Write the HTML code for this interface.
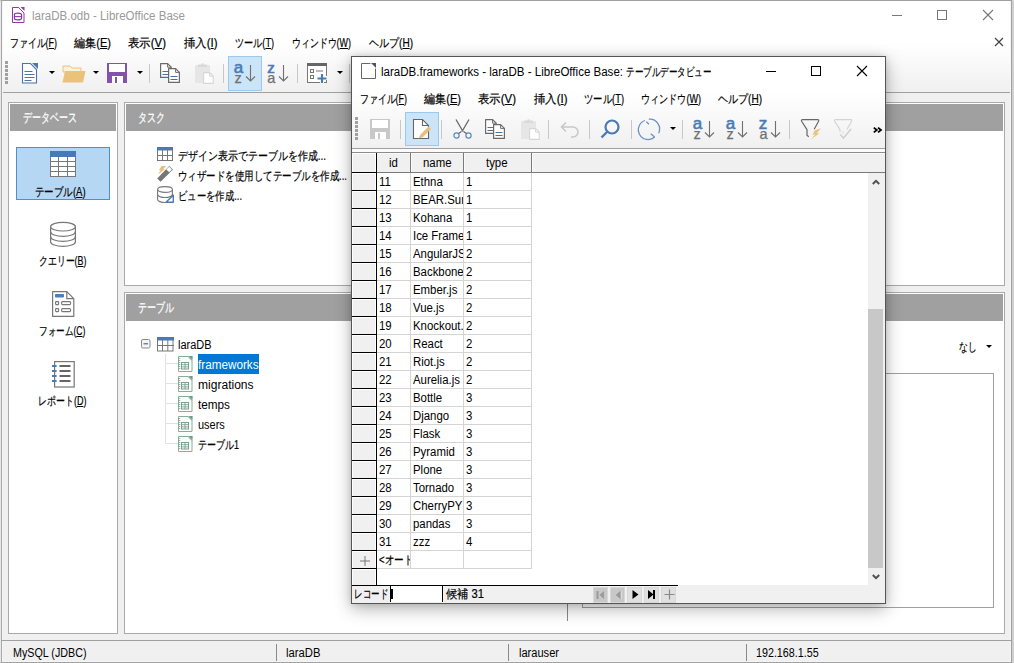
<!DOCTYPE html>
<html><head><meta charset="utf-8">
<style>
*{box-sizing:border-box;margin:0;padding:0}
html,body{width:1014px;height:663px;overflow:hidden}
body{position:relative;background:#d0d0d0;font-family:"Liberation Sans",sans-serif;font-size:12px;color:#000}
.a{position:absolute}
svg{position:absolute;overflow:visible}
.t{position:absolute;white-space:nowrap;line-height:14px;transform-origin:0 50%}
u{text-decoration:underline;text-underline-offset:1px}
.panel{position:absolute;background:#fff;border:1px solid #a9a9a9}
.ph{position:absolute;left:1px;top:1px;right:1px;height:27px;background:#a0a0a0;color:#fff}
.vs{position:absolute;width:1px;background:#c8c8c8}
.dd{position:absolute;width:0;height:0;border-left:3px solid transparent;border-right:3px solid transparent;border-top:3px solid #000}
.hl{position:absolute;background:#cce4f7;border:1px solid #99c9ef}
</style></head><body>
<div id="main" class="a" style="left:0;top:0;width:1012px;height:663px;background:#f0f0f0;border:1px solid #a0a0a0;border-left-color:#e8e8e8">
  <div class="a" style="left:0;top:0;width:1010px;height:91px;background:linear-gradient(#fff 0,#fff 42px,#f0f0f0 91px)"></div>
  <div class="a" style="left:0;top:91px;width:1010px;height:1px;background:#a0a0a0"></div>
  <!-- title icon -->
  <svg style="left:11px;top:6px" width="13" height="17" viewBox="0 0 13 17">
    <path d="M.5 .5h6l5.5 5.5v9.5H.5z" fill="#fff" stroke="#8b3aa6" stroke-width="1"/>
    <path d="M8.5 0h4v4z" fill="#8b3aa6"/><path d="M6.5 .5L12 6" stroke="#8b3aa6" stroke-width="1"/>
    <path d="M2.4 7.6a3.6 1.4 0 0 1 7.2 0v3.6a3.6 1.6 0 0 1-7.2 0z" fill="none" stroke="#8b3aa6" stroke-width="1.2"/>
    <path d="M2.4 9.6h7.2" stroke="#8b3aa6" stroke-width="1.1"/>
  </svg>
  <div class="t" style="left:31px;top:8px;color:#9a9a9a;--w:153">laraDB.odb - LibreOffice Base</div>
  <!-- window controls -->
  <div class="a" style="left:891px;top:14px;width:10px;height:1px;background:#777"></div>
  <div class="a" style="left:936px;top:9px;width:10px;height:10px;border:1px solid #777"></div>
  <svg style="left:982px;top:9px" width="10" height="10"><path d="M0 0L10 10M10 0L0 10" stroke="#777" stroke-width="1.1"/></svg>
  <svg style="left:994px;top:37px" width="8" height="8"><path d="M0 0L8 8M8 0L0 8" stroke="#444" stroke-width="1.2"/></svg>
  <!-- menu -->
  <div class="t" style="left:9px;top:35px;--w:47">ファイル(<u>F</u>)</div>
  <div class="t" style="left:73px;top:35px;--w:37">編集(<u>E</u>)</div>
  <div class="t" style="left:127px;top:35px;--w:38">表示(<u>V</u>)</div>
  <div class="t" style="left:183px;top:35px;--w:33.5">挿入(<u>I</u>)</div>
  <div class="t" style="left:234px;top:35px;--w:39">ツール(<u>T</u>)</div>
  <div class="t" style="left:291px;top:35px;--w:59">ウィンドウ(<u>W</u>)</div>
  <div class="t" style="left:368px;top:35px;--w:44">ヘルプ(<u>H</u>)</div>
  <!-- toolbar -->
  <svg style="left:4px;top:60px" width="4" height="24"><g fill="#a0a0a0"><rect x="0" y="0" width="3" height="3"/><rect x="0" y="4" width="3" height="3"/><rect x="0" y="8" width="3" height="3"/><rect x="0" y="12" width="3" height="3"/><rect x="0" y="16" width="3" height="3"/><rect x="0" y="20" width="3" height="3"/></g></svg>
  <svg style="left:20px;top:62px" width="17" height="21" viewBox="0 0 17 21">
    <path d="M1.5 .5h8l6 6v13.5h-14z" fill="#fff" stroke="#4d73a8" stroke-width="1.1"/>
    <path d="M11 0h6v6z" fill="#4e76a8"/>
    <path d="M3.5 8.5h8M3.5 11.5h10M3.5 14.5h10M3.5 17.5h7" stroke="#4d73a8" stroke-width="1"/>
  </svg>
  <div class="dd" style="left:48px;top:70px"></div>
  <svg style="left:61px;top:64px" width="24" height="18" viewBox="0 0 24 18">
    <path d="M1 1h7l2 2h9v4H1z" fill="#fdf4d8" stroke="#e6c27e" stroke-width="1"/>
    <path d="M3 6h20.5l-2.5 11.5H.5z" fill="#ebc27c"/>
  </svg>
  <div class="dd" style="left:92px;top:70px"></div>
  <svg style="left:106px;top:62px" width="20" height="20" viewBox="0 0 20 20">
    <rect x="0" y="0" width="20" height="20" fill="#8352ad"/><rect x="2" y="1" width="16" height="8" fill="#fff"/><rect x="5" y="13" width="11" height="7" fill="#fff"/><rect x="8" y="14" width="2" height="6" fill="#8352ad"/>
  </svg>
  <div class="dd" style="left:136px;top:70px"></div>
  <div class="vs" style="left:148px;top:63px;height:19px"></div>
  <svg style="left:159px;top:62px" width="21" height="21" viewBox="0 0 21 21"><path d="M.6 .6h7l3.6 3.6v10.2H.6z" fill="#fff" stroke="#6a6a6a" stroke-width="1.2" stroke-linejoin="round"/><path d="M7.6 .6v3.6h3.6" fill="none" stroke="#6a6a6a" stroke-width="1"/><path d="M2.5 8.5h6M2.5 11.5h6" stroke="#4d6f9e" stroke-width="1"/><path d="M8.6 5.6h7l3.8 3.8v10h-10.8z" fill="#fff" stroke="#6a6a6a" stroke-width="1.2" stroke-linejoin="round"/><path d="M15.6 5.6v3.8h3.8" fill="none" stroke="#6a6a6a" stroke-width="1"/><path d="M10.5 13.5h7M10.5 16.5h7" stroke="#4d6f9e" stroke-width="1"/></svg>
  <svg style="left:193px;top:62px" width="21" height="21" viewBox="0 0 21 21"><rect x="1" y="2" width="15" height="18" rx="1" fill="#e6e6e6"/><path d="M4 1.5h9v2.5H4z" fill="#dadada"/><circle cx="8.5" cy="1.5" r="1.3" fill="#dadada"/><path d="M9.6 9.6h6l3.6 3.6v7.2H9.6z" fill="#fff" stroke="#d6d6d6" stroke-width="1.1" stroke-linejoin="round"/><path d="M15.6 9.6v3.6h3.6" fill="none" stroke="#d6d6d6" stroke-width="1"/></svg>
  <div class="vs" style="left:222px;top:63px;height:19px"></div>
  <div class="hl" style="left:227px;top:55px;width:34px;height:35px"></div>
  <svg style="left:233px;top:62px" width="23" height="22" viewBox="0 0 23 22"><text x="-.3" y="9.7" font-family="Liberation Sans" font-size="17" fill="#4a7ab5" stroke="#4a7ab5" stroke-width=".55">a</text><text x=".6" y="19.8" font-family="Liberation Sans" font-size="14.5" fill="#707070" stroke="#707070" stroke-width=".25">z</text><path d="M16.5 2v16M12 13.5l4.5 4.5 4.5-4.5" fill="none" stroke="#707070" stroke-width="1.1"/></svg>
  <svg style="left:266px;top:62px" width="23" height="22" viewBox="0 0 23 22"><text x=".2" y="9.7" font-family="Liberation Sans" font-size="15" fill="#4a7ab5" stroke="#4a7ab5" stroke-width=".7">z</text><text x=".3" y="19.8" font-family="Liberation Sans" font-size="14.5" fill="#707070" stroke="#707070" stroke-width=".25">a</text><path d="M16.5 2v16M12 13.5l4.5 4.5 4.5-4.5" fill="none" stroke="#707070" stroke-width="1.1"/></svg>
  <div class="vs" style="left:296px;top:63px;height:19px"></div>
  <svg style="left:306px;top:62px" width="22" height="21" viewBox="0 0 22 21">
    <rect x=".5" y=".5" width="19" height="19" fill="#fff" stroke="#777"/>
    <rect x="0" y="0" width="20" height="3" fill="#666"/>
    <rect x="3.5" y="6.5" width="3" height="3" fill="none" stroke="#777"/>
    <rect x="3.5" y="12.5" width="3" height="3" fill="none" stroke="#777"/>
    <path d="M9 8h7" stroke="#777"/>
    <path d="M15 10v10M10 15h10" stroke="#fff" stroke-width="4"/>
    <path d="M15 11v9M10.5 15.5h9" stroke="#4a7ab5" stroke-width="2.2"/>
  </svg>
  <div class="dd" style="left:336px;top:70px"></div>
  <div class="vs" style="left:348px;top:63px;height:19px"></div>

  <!-- panels -->
  <div class="panel" style="left:7px;top:101px;width:110px;height:532px">
    <div class="ph"><div class="t" style="left:13px;top:7px;font-size:12.5px;-webkit-text-stroke:.25px #fff;--w:54">データベース</div></div>
  </div>
  <div class="panel" style="left:123px;top:101px;width:881px;height:184px">
    <div class="ph"><div class="t" style="left:12px;top:7px;font-size:12.5px;-webkit-text-stroke:.25px #fff;--w:27">タスク</div></div>
  </div>
  <div class="panel" style="left:123px;top:291px;width:881px;height:342px">
    <div class="ph"><div class="t" style="left:12px;top:7px;font-size:12.5px;-webkit-text-stroke:.25px #fff;--w:36">テーブル</div></div>
  </div>


  <!-- left panel content -->
  <div class="a" style="left:15px;top:146px;width:94px;height:53px;background:#b5d7f3;border:1px solid #4f8fcb"></div>
  <svg style="left:49px;top:150px" width="26" height="26" viewBox="0 0 26 26">
    <rect x=".5" y=".5" width="25" height="25" fill="#fff" stroke="#777"/>
    <rect x="0" y="0" width="26" height="6" fill="#4a7ab5"/>
    <path d="M8.5 6v20M17.5 6v20M0 10.5h26M0 15.5h26M0 20.5h26" stroke="#777"/>
  </svg>
  <div class="t" style="left:34px;top:184px;--w:50.6">テーブル(<u>A</u>)</div>
  <svg style="left:49px;top:221px" width="26" height="26" viewBox="0 0 26 26">
    <path d="M.6 4.7v15a12.4 4.7 0 0 0 24.8 0v-15" fill="#fff" stroke="#777" stroke-width="1.2"/>
    <path d="M.6 9.7a12.4 4.7 0 0 0 24.8 0M.6 14.7a12.4 4.7 0 0 0 24.8 0" fill="none" stroke="#777" stroke-width="1.2"/>
    <ellipse cx="13" cy="4.7" rx="12.4" ry="4.3" fill="#fff" stroke="#777" stroke-width="1.2"/>
  </svg>
  <div class="t" style="left:37.5px;top:252.5px;--w:47.4">クエリー(<u>B</u>)</div>
  <svg style="left:51px;top:290px" width="23" height="27" viewBox="0 0 23 27">
    <path d="M.6 .6h14.2l7 7v17.8H.6z" fill="#fff" stroke="#777" stroke-width="1.2" stroke-linejoin="round"/>
    <path d="M14.8 .6v7h7" fill="none" stroke="#777" stroke-width="1.2"/>
    <rect x="3" y="3" width="9" height="3.6" rx=".8" fill="#4a80c0"/>
    <rect x="3.6" y="10.6" width="3" height="3" rx=".6" fill="none" stroke="#777" stroke-width="1.1"/>
    <rect x="3.6" y="17.6" width="3" height="3" rx=".6" fill="none" stroke="#777" stroke-width="1.1"/>
    <rect x="9.6" y="10.6" width="9" height="3" rx="1" fill="none" stroke="#777" stroke-width="1.1"/>
    <rect x="9.6" y="17.6" width="9" height="3" rx="1" fill="none" stroke="#777" stroke-width="1.1"/>
  </svg>
  <div class="t" style="left:37.5px;top:322.5px;--w:46.4">フォーム(<u>C</u>)</div>
  <svg style="left:50px;top:359px" width="24" height="28" viewBox="0 0 24 28">
    <rect x="3.6" y="1.6" width="19.6" height="25.4" fill="#fff" stroke="#777" stroke-width="1.2"/>
    <path d="M1 6h4.6M1 11h4.6M1 16h4.6M1 21h4.6" stroke="#4a7ab5" stroke-width="2"/>
    <path d="M8.5 6h11M8.5 11h11M8.5 16h11M8.5 21h11" stroke="#666" stroke-width="1.8"/>
  </svg>
  <div class="t" style="left:36.5px;top:392.5px;--w:48.4">レポート(<u>D</u>)</div>

  <!-- task panel content -->
  <svg style="left:156px;top:146px" width="16" height="15" viewBox="0 0 16 15">
    <rect x=".5" y=".5" width="15" height="13" fill="#fff" stroke="#777"/>
    <rect x="0" y="0" width="16" height="3.5" fill="#4a7ab5"/>
    <path d="M5.5 3v11M10.5 3v11M0 8.5h16" stroke="#777"/>
  </svg>
  <div class="t" style="left:177px;top:148px;--w:148">デザイン表示でテーブルを作成...</div>
  <svg style="left:153px;top:162px" width="22" height="21" viewBox="0 0 22 21">
    <path d="M3.2 15.5L15.2 3 19 6.6 6.6 18.8z" fill="#777"/>
    <path d="M12.3 6.4L15.2 3.8 18 6.6 15.2 9.3z" fill="#fff"/>
    <path d="M7.5 3h4.8L9 6.3h2L4 11.2 6.6 7.3H4.8z" fill="#e9c07c"/>
  </svg>
  <div class="t" style="left:177px;top:168px;--w:169">ウィザードを使用してテーブルを作成...</div>
  <svg style="left:156px;top:185px" width="17" height="17" viewBox="0 0 17 17">
    <path d="M.6 3.5v10a7.4 3 0 0 0 14.8 0v-10" fill="#fff" stroke="#777" stroke-width="1.1"/>
    <path d="M.6 8.5a7.4 3 0 0 0 14.8 0" fill="none" stroke="#777" stroke-width="1.1"/>
    <ellipse cx="8" cy="3.5" rx="7.4" ry="2.9" fill="#fff" stroke="#777" stroke-width="1.1"/>
    <path d="M16.3 9.2v7.1H9z" fill="#fff" stroke="#4a7ab5" stroke-width="1.4" stroke-linejoin="round"/>
  </svg>
  <div class="t" style="left:177px;top:188px;--w:64">ビューを作成...</div>

  <!-- table panel content -->
  <svg style="left:140px;top:338px" width="10" height="10" viewBox="0 0 10 10">
    <rect x=".5" y=".5" width="8.5" height="8.5" rx="1.5" fill="#f4f4f4" stroke="#8a8a8a"/>
    <path d="M2.5 4.8h4.5" stroke="#3b5f9a" stroke-width="1.1"/>
  </svg>
  <svg style="left:156px;top:336px" width="17" height="15" viewBox="0 0 17 15">
    <rect x=".5" y=".5" width="15.5" height="13.5" fill="#fff" stroke="#777"/>
    <rect x="0" y="0" width="17" height="3.5" fill="#4a7ab5"/>
    <path d="M5.5 3v11M10.8 3v11M0 8.5h17" stroke="#777"/>
  </svg>
  <div class="t" style="left:177px;top:337px;--w:33.5">laraDB</div>
  <div class="a" style="left:164px;top:353px;width:1px;height:90px;background:#e2e2e2"></div>
  <div class="a" style="left:196.7px;top:353px;width:61.3px;height:20px;background:#0078d7"></div>
  <div class="a" style="left:165px;top:362px;width:12px;height:1px;background:#e2e2e2"></div>
  <svg style="left:177px;top:355px" width="15" height="17" viewBox="0 0 15 17">
    <path d="M.5 .5h9.8l3.7 3.7v11.3H.5z" fill="#fff" stroke="#8aaa9b" stroke-width="1"/>
    <path d="M10.6 0h4v4z" fill="#6d9884"/><path d="M10 .5l4 4" stroke="#8aaa9b" stroke-width="1"/>
    <path d="M1 2.5h1.3M1 4.5h1.3M1 6.5h1.3M1 8.5h1.3M1 10.5h1.3M1 12.5h1.3" stroke="#8aaa9b" stroke-width=".9"/>
    <rect x="3.5" y="6.5" width="7" height="6.5" fill="#fff" stroke="#7ba08e" stroke-width="1"/>
    <path d="M7 6.5v6.5M3.5 8.7h7M3.5 10.9h7" stroke="#7ba08e" stroke-width=".9"/>
  </svg>
  <div class="t" style="left:197px;top:357px;color:#fff;--w:60.5">frameworks</div>
  <div class="a" style="left:165px;top:382px;width:12px;height:1px;background:#e2e2e2"></div>
  <svg style="left:177px;top:375px" width="15" height="17" viewBox="0 0 15 17">
    <path d="M.5 .5h9.8l3.7 3.7v11.3H.5z" fill="#fff" stroke="#8aaa9b" stroke-width="1"/>
    <path d="M10.6 0h4v4z" fill="#6d9884"/><path d="M10 .5l4 4" stroke="#8aaa9b" stroke-width="1"/>
    <path d="M1 2.5h1.3M1 4.5h1.3M1 6.5h1.3M1 8.5h1.3M1 10.5h1.3M1 12.5h1.3" stroke="#8aaa9b" stroke-width=".9"/>
    <rect x="3.5" y="6.5" width="7" height="6.5" fill="#fff" stroke="#7ba08e" stroke-width="1"/>
    <path d="M7 6.5v6.5M3.5 8.7h7M3.5 10.9h7" stroke="#7ba08e" stroke-width=".9"/>
  </svg>
  <div class="t" style="left:197px;top:377px;color:#000;--w:55.6">migrations</div>
  <div class="a" style="left:165px;top:402px;width:12px;height:1px;background:#e2e2e2"></div>
  <svg style="left:177px;top:395px" width="15" height="17" viewBox="0 0 15 17">
    <path d="M.5 .5h9.8l3.7 3.7v11.3H.5z" fill="#fff" stroke="#8aaa9b" stroke-width="1"/>
    <path d="M10.6 0h4v4z" fill="#6d9884"/><path d="M10 .5l4 4" stroke="#8aaa9b" stroke-width="1"/>
    <path d="M1 2.5h1.3M1 4.5h1.3M1 6.5h1.3M1 8.5h1.3M1 10.5h1.3M1 12.5h1.3" stroke="#8aaa9b" stroke-width=".9"/>
    <rect x="3.5" y="6.5" width="7" height="6.5" fill="#fff" stroke="#7ba08e" stroke-width="1"/>
    <path d="M7 6.5v6.5M3.5 8.7h7M3.5 10.9h7" stroke="#7ba08e" stroke-width=".9"/>
  </svg>
  <div class="t" style="left:197px;top:397px;color:#000;--w:32">temps</div>
  <div class="a" style="left:165px;top:422px;width:12px;height:1px;background:#e2e2e2"></div>
  <svg style="left:177px;top:415px" width="15" height="17" viewBox="0 0 15 17">
    <path d="M.5 .5h9.8l3.7 3.7v11.3H.5z" fill="#fff" stroke="#8aaa9b" stroke-width="1"/>
    <path d="M10.6 0h4v4z" fill="#6d9884"/><path d="M10 .5l4 4" stroke="#8aaa9b" stroke-width="1"/>
    <path d="M1 2.5h1.3M1 4.5h1.3M1 6.5h1.3M1 8.5h1.3M1 10.5h1.3M1 12.5h1.3" stroke="#8aaa9b" stroke-width=".9"/>
    <rect x="3.5" y="6.5" width="7" height="6.5" fill="#fff" stroke="#7ba08e" stroke-width="1"/>
    <path d="M7 6.5v6.5M3.5 8.7h7M3.5 10.9h7" stroke="#7ba08e" stroke-width=".9"/>
  </svg>
  <div class="t" style="left:197px;top:417px;color:#000;--w:26.8">users</div>
  <div class="a" style="left:165px;top:442px;width:12px;height:1px;background:#e2e2e2"></div>
  <svg style="left:177px;top:435px" width="15" height="17" viewBox="0 0 15 17">
    <path d="M.5 .5h9.8l3.7 3.7v11.3H.5z" fill="#fff" stroke="#8aaa9b" stroke-width="1"/>
    <path d="M10.6 0h4v4z" fill="#6d9884"/><path d="M10 .5l4 4" stroke="#8aaa9b" stroke-width="1"/>
    <path d="M1 2.5h1.3M1 4.5h1.3M1 6.5h1.3M1 8.5h1.3M1 10.5h1.3M1 12.5h1.3" stroke="#8aaa9b" stroke-width=".9"/>
    <rect x="3.5" y="6.5" width="7" height="6.5" fill="#fff" stroke="#7ba08e" stroke-width="1"/>
    <path d="M7 6.5v6.5M3.5 8.7h7M3.5 10.9h7" stroke="#7ba08e" stroke-width=".9"/>
  </svg>
  <div class="t" style="left:197px;top:437px;color:#000;--w:41">テーブル1</div>

  <div class="t" style="left:957.6px;top:339px;--w:17.5">なし</div>
  <div class="dd" style="left:985px;top:344px"></div>
  <div class="a" style="left:581px;top:372px;width:412px;height:235px;background:#fff;border:1px solid #a0a0a0"></div>
  <div class="a" style="left:566px;top:330px;width:1px;height:290px;background:#8a8a8a"></div>
  <!-- status bar -->
  <div class="a" style="left:0;top:-1px;width:1px;height:663px;background:#a8a8a8"></div>
  <div class="a" style="left:1px;top:0;width:1px;height:661px;background:#f5f5f5"></div>
  <div class="a" style="left:1009px;top:0;width:1px;height:661px;background:#f5f5f5"></div>
  <div class="a" style="left:1px;top:660px;width:1009px;height:1px;background:#f5f5f5"></div>
  <div class="a" style="left:0;top:639px;width:1010px;height:1px;background:#a0a0a0"></div>
  <div class="t" style="left:12px;top:645px;--w:73.5">MySQL (JDBC)</div>
  <div class="a" style="left:275px;top:643px;width:1px;height:17px;background:#8a8a8a"></div>
  <div class="t" style="left:285px;top:645px;--w:34.4">laraDB</div>
  <div class="a" style="left:507px;top:643px;width:1px;height:17px;background:#8a8a8a"></div>
  <div class="t" style="left:518px;top:645px;--w:40">larauser</div>
  <div class="a" style="left:745px;top:643px;width:1px;height:17px;background:#8a8a8a"></div>
  <div class="t" style="left:755px;top:645px;--w:62.6">192.168.1.55</div>
</div>
<div id="dlg" class="a" style="left:351px;top:56px;width:535px;height:548px;background:#f0f0f0;border:1px solid #555;box-shadow:0 5px 16px rgba(0,0,0,.30),0 0 6px rgba(0,0,0,.12)">
<div class="a" style="left:0;top:0;width:533px;height:91px;background:linear-gradient(#fff 0,#fff 36px,#f0f0f0 91px)"></div>
<div class="a" style="left:0;top:91px;width:533px;height:1px;background:#a0a0a0"></div>
<div class="a" style="left:0;top:92px;width:533px;height:3px;background:#fbfbfb"></div>
<svg style="left:9px;top:6px" width="15" height="16" viewBox="0 0 15 16"><path d="M.5 .5h9l5 5v10h-14z" fill="#fff" stroke="#666" stroke-width="1"/><path d="M10 0h5v5z" fill="#555"/><path d="M9.5 .5l5 5" stroke="#fff" stroke-width="1"/></svg>
<div class="t" style="left:29px;top:8px;--w:242">laraDB.frameworks - laraDB - LibreOffice Base:</div>
<div class="t" style="left:274px;top:8px;--w:85">テーブルデータビュー</div>
<div class="a" style="left:414px;top:14px;width:10px;height:1px;background:#000"></div>
<div class="a" style="left:459px;top:9px;width:10px;height:10px;border:1px solid #000"></div>
<svg style="left:505px;top:9px" width="10" height="10"><path d="M0 0L10 10M10 0L0 10" stroke="#000" stroke-width="1.1"/></svg>
<div class="t" style="left:8px;top:35px;--w:47">ファイル(<u>F</u>)</div>
<div class="t" style="left:72px;top:35px;--w:37">編集(<u>E</u>)</div>
<div class="t" style="left:126px;top:35px;--w:38">表示(<u>V</u>)</div>
<div class="t" style="left:182px;top:35px;--w:33.5">挿入(<u>I</u>)</div>
<div class="t" style="left:232px;top:35px;--w:40">ツール(<u>T</u>)</div>
<div class="t" style="left:289px;top:35px;--w:60">ウィンドウ(<u>W</u>)</div>
<div class="t" style="left:366px;top:35px;--w:44">ヘルプ(<u>H</u>)</div>
<svg style="left:3px;top:60px" width="4" height="24"><g fill="#a0a0a0"><rect x="0" y="0" width="3" height="3"/><rect x="0" y="4" width="3" height="3"/><rect x="0" y="8" width="3" height="3"/><rect x="0" y="12" width="3" height="3"/><rect x="0" y="16" width="3" height="3"/><rect x="0" y="20" width="3" height="3"/></g></svg>
<svg style="left:18px;top:62px" width="20" height="20" viewBox="0 0 20 20"><rect x="0" y="0" width="20" height="20" fill="#c8c8c8"/><rect x="2" y="1" width="16" height="8" fill="#fff"/><rect x="5" y="13" width="11" height="7" fill="#fff"/><rect x="8" y="14" width="2" height="6" fill="#c8c8c8"/></svg>
<div class="vs" style="left:48px;top:63px;height:19px"></div>
<div class="vs" style="left:89px;top:63px;height:19px"></div>
<div class="vs" style="left:196px;top:63px;height:19px"></div>
<div class="vs" style="left:237px;top:63px;height:19px"></div>
<div class="vs" style="left:279px;top:63px;height:19px"></div>
<div class="vs" style="left:330px;top:63px;height:19px"></div>
<div class="vs" style="left:437px;top:63px;height:19px"></div>
<div class="hl" style="left:53px;top:55px;width:34px;height:34px"></div>
<svg style="left:61px;top:62px" width="20" height="21" viewBox="0 0 20 21"><path d="M.5 .5h9l6 6v13h-15z" fill="#fff" stroke="#666" stroke-width="1.1"/><path d="M9.5 .5v6h6" fill="none" stroke="#666" stroke-width="1.1"/><path d="M5.5 19.5l2-4 8-8 2.5 2.5-8 8z" fill="#e5be7c"/></svg>
<svg style="left:101px;top:62px" width="19" height="20" viewBox="0 0 19 20"><path d="M3 .5l7 12M16 .5l-7 12" stroke="#666" stroke-width="1.3"/><circle cx="3.5" cy="16.5" r="2.6" fill="none" stroke="#5a8ab8" stroke-width="1.2"/><circle cx="15.5" cy="16.5" r="2.6" fill="none" stroke="#5a8ab8" stroke-width="1.2"/><path d="M5.5 14.5l3-2M13.5 14.5l-3-2" stroke="#666" stroke-width="1.2"/></svg>
<svg style="left:133px;top:62px" width="21" height="21" viewBox="0 0 21 21"><path d="M.6 .6h7l3.6 3.6v10.2H.6z" fill="#fff" stroke="#6a6a6a" stroke-width="1.2" stroke-linejoin="round"/><path d="M7.6 .6v3.6h3.6" fill="none" stroke="#6a6a6a" stroke-width="1"/><path d="M2.5 8.5h6M2.5 11.5h6" stroke="#4d6f9e" stroke-width="1"/><path d="M8.6 5.6h7l3.8 3.8v10h-10.8z" fill="#fff" stroke="#6a6a6a" stroke-width="1.2" stroke-linejoin="round"/><path d="M15.6 5.6v3.8h3.8" fill="none" stroke="#6a6a6a" stroke-width="1"/><path d="M10.5 13.5h7M10.5 16.5h7" stroke="#4d6f9e" stroke-width="1"/></svg>
<svg style="left:168px;top:62px" width="21" height="21" viewBox="0 0 21 21"><rect x="1" y="2" width="15" height="18" rx="1" fill="#e6e6e6"/><path d="M4 1.5h9v2.5H4z" fill="#dadada"/><circle cx="8.5" cy="1.5" r="1.3" fill="#dadada"/><path d="M9.6 9.6h6l3.6 3.6v7.2H9.6z" fill="#fff" stroke="#d6d6d6" stroke-width="1.1" stroke-linejoin="round"/><path d="M15.6 9.6v3.6h3.6" fill="none" stroke="#d6d6d6" stroke-width="1"/></svg>
<svg style="left:208px;top:63px" width="20" height="18" viewBox="0 0 20 18"><path d="M2 7h11a5 5 0 0 1 0 10h-2M6 2.5L1.5 7 6 11.5" fill="none" stroke="#c8c8c8" stroke-width="1.6"/></svg>
<svg style="left:248px;top:62px" width="20" height="20" viewBox="0 0 20 20"><circle cx="12" cy="8" r="6.5" fill="none" stroke="#4a7ab5" stroke-width="2.2"/><path d="M7.5 12.5L1.5 18.5" stroke="#4a7ab5" stroke-width="2.4"/></svg>
<svg style="left:287px;top:61px" width="22" height="22" viewBox="0 0 22 22"><path d="M9.8 1.2A9.8 9.8 0 0 1 19.6 15.2M15.7 19.1A9.8 9.8 0 1 1 6 2.5" fill="none" stroke="#6a93bf" stroke-width="1.3"/><path d="M7.3 3.7L10 6.2M11.8 15.7L15.6 19" fill="none" stroke="#6a93bf" stroke-width="1.3"/></svg>
<div class="dd" style="left:318px;top:70px"></div>
<svg style="left:341px;top:62px" width="23" height="22" viewBox="0 0 23 22"><text x="-.3" y="9.7" font-family="Liberation Sans" font-size="17" fill="#4a7ab5" stroke="#4a7ab5" stroke-width=".55">a</text><text x=".6" y="19.8" font-family="Liberation Sans" font-size="14.5" fill="#707070" stroke="#707070" stroke-width=".25">z</text><path d="M16.5 2v16M12 13.5l4.5 4.5 4.5-4.5" fill="none" stroke="#707070" stroke-width="1.1"/></svg>
<svg style="left:374px;top:62px" width="23" height="22" viewBox="0 0 23 22"><text x="-.3" y="9.7" font-family="Liberation Sans" font-size="17" fill="#4a7ab5" stroke="#4a7ab5" stroke-width=".55">a</text><text x=".6" y="19.8" font-family="Liberation Sans" font-size="14.5" fill="#707070" stroke="#707070" stroke-width=".25">z</text><path d="M16.5 2v16M12 13.5l4.5 4.5 4.5-4.5" fill="none" stroke="#707070" stroke-width="1.1"/></svg>
<svg style="left:407px;top:62px" width="23" height="22" viewBox="0 0 23 22"><text x="-.3" y="9.7" font-family="Liberation Sans" font-size="17" fill="#4a7ab5" stroke="#4a7ab5" stroke-width=".55">z</text><text x=".6" y="19.8" font-family="Liberation Sans" font-size="14.5" fill="#707070" stroke="#707070" stroke-width=".25">a</text><path d="M16.5 2v16M12 13.5l4.5 4.5 4.5-4.5" fill="none" stroke="#707070" stroke-width="1.1"/></svg>
<svg style="left:448px;top:61px" width="22" height="22" viewBox="0 0 22 22"><path d="M14.2 11.3L18.6 3.2Q19.2 1.6 17.6 1.6H2.6Q1 1.6 1.6 3.2L7 11.6V17.2L8.8 18.7" fill="none" stroke="#666" stroke-width="1.2" stroke-linejoin="round"/><path d="M21 10.2L14.6 12.6 12.6 16.8 15.4 16.4 10.6 21.6 19.6 15.2 16.6 15.4z" fill="#e9c27e"/></svg>
<svg style="left:481px;top:61px" width="22" height="22" viewBox="0 0 22 22"><path d="M2.6 1.6H17.6Q19.2 1.6 18.6 3.2L14 11.3M7 11.6L1.6 3.2Q1 1.6 2.6 1.6M7 11.6V14" fill="none" stroke="#d4d4d4" stroke-width="1.2" stroke-linejoin="round"/><path d="M7.2 16.5l3.3 3.5 7.6-9" fill="none" stroke="#cfcfcf" stroke-width="1.5"/><path d="M10 13v3" stroke="#ddd" stroke-width="1"/></svg>
<svg style="left:521px;top:70px" width="10" height="6" viewBox="0 0 10 6"><path d="M.8 .6l3 2.4-3 2.4M5 .6l3 2.4-3 2.4" fill="none" stroke="#000" stroke-width="1.8"/></svg>
<div class="a" style="left:0;top:95px;width:533px;height:1px;background:#8c8c8c"></div>
<div class="a" style="left:0;top:96px;width:533px;height:19px;background:#f0f0f0"></div>
<div class="a" style="left:25px;top:96px;width:508px;height:1px;background:#fafafa"></div>
<div class="a" style="left:0;top:115px;width:533px;height:1px;background:#7a7a7a"></div>
<div class="a" style="left:25px;top:116px;width:491px;height:412px;background:#fff"></div>
<div class="a" style="left:0;top:96px;width:24px;height:19px;background:#f0f0f0;border:1px solid #fff;border-bottom:0"></div>
<div class="a" style="left:0;top:115px;width:24px;height:1px;background:#000"></div>
<div class="a" style="left:0;top:116px;width:24px;height:17px;background:#f0f0f0;border:1px solid #fff;border-bottom:0"></div>
<div class="a" style="left:0;top:133px;width:24px;height:1px;background:#000"></div>
<div class="a" style="left:0;top:134px;width:24px;height:17px;background:#f0f0f0;border:1px solid #fff;border-bottom:0"></div>
<div class="a" style="left:0;top:151px;width:24px;height:1px;background:#000"></div>
<div class="a" style="left:0;top:152px;width:24px;height:17px;background:#f0f0f0;border:1px solid #fff;border-bottom:0"></div>
<div class="a" style="left:0;top:169px;width:24px;height:1px;background:#000"></div>
<div class="a" style="left:0;top:170px;width:24px;height:17px;background:#f0f0f0;border:1px solid #fff;border-bottom:0"></div>
<div class="a" style="left:0;top:187px;width:24px;height:1px;background:#000"></div>
<div class="a" style="left:0;top:188px;width:24px;height:17px;background:#f0f0f0;border:1px solid #fff;border-bottom:0"></div>
<div class="a" style="left:0;top:205px;width:24px;height:1px;background:#000"></div>
<div class="a" style="left:0;top:206px;width:24px;height:17px;background:#f0f0f0;border:1px solid #fff;border-bottom:0"></div>
<div class="a" style="left:0;top:223px;width:24px;height:1px;background:#000"></div>
<div class="a" style="left:0;top:224px;width:24px;height:17px;background:#f0f0f0;border:1px solid #fff;border-bottom:0"></div>
<div class="a" style="left:0;top:241px;width:24px;height:1px;background:#000"></div>
<div class="a" style="left:0;top:242px;width:24px;height:17px;background:#f0f0f0;border:1px solid #fff;border-bottom:0"></div>
<div class="a" style="left:0;top:259px;width:24px;height:1px;background:#000"></div>
<div class="a" style="left:0;top:260px;width:24px;height:17px;background:#f0f0f0;border:1px solid #fff;border-bottom:0"></div>
<div class="a" style="left:0;top:277px;width:24px;height:1px;background:#000"></div>
<div class="a" style="left:0;top:278px;width:24px;height:17px;background:#f0f0f0;border:1px solid #fff;border-bottom:0"></div>
<div class="a" style="left:0;top:295px;width:24px;height:1px;background:#000"></div>
<div class="a" style="left:0;top:296px;width:24px;height:17px;background:#f0f0f0;border:1px solid #fff;border-bottom:0"></div>
<div class="a" style="left:0;top:313px;width:24px;height:1px;background:#000"></div>
<div class="a" style="left:0;top:314px;width:24px;height:17px;background:#f0f0f0;border:1px solid #fff;border-bottom:0"></div>
<div class="a" style="left:0;top:331px;width:24px;height:1px;background:#000"></div>
<div class="a" style="left:0;top:332px;width:24px;height:17px;background:#f0f0f0;border:1px solid #fff;border-bottom:0"></div>
<div class="a" style="left:0;top:349px;width:24px;height:1px;background:#000"></div>
<div class="a" style="left:0;top:350px;width:24px;height:17px;background:#f0f0f0;border:1px solid #fff;border-bottom:0"></div>
<div class="a" style="left:0;top:367px;width:24px;height:1px;background:#000"></div>
<div class="a" style="left:0;top:368px;width:24px;height:17px;background:#f0f0f0;border:1px solid #fff;border-bottom:0"></div>
<div class="a" style="left:0;top:385px;width:24px;height:1px;background:#000"></div>
<div class="a" style="left:0;top:386px;width:24px;height:17px;background:#f0f0f0;border:1px solid #fff;border-bottom:0"></div>
<div class="a" style="left:0;top:403px;width:24px;height:1px;background:#000"></div>
<div class="a" style="left:0;top:404px;width:24px;height:17px;background:#f0f0f0;border:1px solid #fff;border-bottom:0"></div>
<div class="a" style="left:0;top:421px;width:24px;height:1px;background:#000"></div>
<div class="a" style="left:0;top:422px;width:24px;height:17px;background:#f0f0f0;border:1px solid #fff;border-bottom:0"></div>
<div class="a" style="left:0;top:439px;width:24px;height:1px;background:#000"></div>
<div class="a" style="left:0;top:440px;width:24px;height:17px;background:#f0f0f0;border:1px solid #fff;border-bottom:0"></div>
<div class="a" style="left:0;top:457px;width:24px;height:1px;background:#000"></div>
<div class="a" style="left:0;top:458px;width:24px;height:17px;background:#f0f0f0;border:1px solid #fff;border-bottom:0"></div>
<div class="a" style="left:0;top:475px;width:24px;height:1px;background:#000"></div>
<div class="a" style="left:0;top:476px;width:24px;height:17px;background:#f0f0f0;border:1px solid #fff;border-bottom:0"></div>
<div class="a" style="left:0;top:493px;width:24px;height:1px;background:#000"></div>
<div class="a" style="left:0;top:494px;width:24px;height:17px;background:#f0f0f0;border:1px solid #fff;border-bottom:0"></div>
<div class="a" style="left:0;top:511px;width:24px;height:1px;background:#000"></div>
<div class="a" style="left:0;top:512px;width:24px;height:16px;background:#f0f0f0;border:1px solid #fff;border-bottom:0"></div>
<div class="a" style="left:24px;top:96px;width:1px;height:432px;background:#000"></div>
<div class="a" style="left:58px;top:96px;width:1px;height:19px;background:#7a7a7a"></div>
<div class="a" style="left:59px;top:96px;width:1px;height:19px;background:#fafafa"></div>
<div class="a" style="left:58px;top:116px;width:1px;height:395px;background:#d4d4d4"></div>
<div class="a" style="left:111px;top:96px;width:1px;height:19px;background:#7a7a7a"></div>
<div class="a" style="left:112px;top:96px;width:1px;height:19px;background:#fafafa"></div>
<div class="a" style="left:111px;top:116px;width:1px;height:395px;background:#d4d4d4"></div>
<div class="a" style="left:179px;top:96px;width:1px;height:19px;background:#7a7a7a"></div>
<div class="a" style="left:180px;top:96px;width:1px;height:19px;background:#fafafa"></div>
<div class="a" style="left:179px;top:116px;width:1px;height:395px;background:#d4d4d4"></div>
<div class="a" style="left:25px;top:133px;width:155px;height:1px;background:#d4d4d4"></div>
<div class="a" style="left:25px;top:151px;width:155px;height:1px;background:#d4d4d4"></div>
<div class="a" style="left:25px;top:169px;width:155px;height:1px;background:#d4d4d4"></div>
<div class="a" style="left:25px;top:187px;width:155px;height:1px;background:#d4d4d4"></div>
<div class="a" style="left:25px;top:205px;width:155px;height:1px;background:#d4d4d4"></div>
<div class="a" style="left:25px;top:223px;width:155px;height:1px;background:#d4d4d4"></div>
<div class="a" style="left:25px;top:241px;width:155px;height:1px;background:#d4d4d4"></div>
<div class="a" style="left:25px;top:259px;width:155px;height:1px;background:#d4d4d4"></div>
<div class="a" style="left:25px;top:277px;width:155px;height:1px;background:#d4d4d4"></div>
<div class="a" style="left:25px;top:295px;width:155px;height:1px;background:#d4d4d4"></div>
<div class="a" style="left:25px;top:313px;width:155px;height:1px;background:#d4d4d4"></div>
<div class="a" style="left:25px;top:331px;width:155px;height:1px;background:#d4d4d4"></div>
<div class="a" style="left:25px;top:349px;width:155px;height:1px;background:#d4d4d4"></div>
<div class="a" style="left:25px;top:367px;width:155px;height:1px;background:#d4d4d4"></div>
<div class="a" style="left:25px;top:385px;width:155px;height:1px;background:#d4d4d4"></div>
<div class="a" style="left:25px;top:403px;width:155px;height:1px;background:#d4d4d4"></div>
<div class="a" style="left:25px;top:421px;width:155px;height:1px;background:#d4d4d4"></div>
<div class="a" style="left:25px;top:439px;width:155px;height:1px;background:#d4d4d4"></div>
<div class="a" style="left:25px;top:457px;width:155px;height:1px;background:#d4d4d4"></div>
<div class="a" style="left:25px;top:475px;width:155px;height:1px;background:#d4d4d4"></div>
<div class="a" style="left:25px;top:493px;width:155px;height:1px;background:#d4d4d4"></div>
<div class="a" style="left:25px;top:511px;width:155px;height:1px;background:#d4d4d4"></div>
<div class="t" style="left:37px;top:99px;--s:.95">id</div>
<div class="t" style="left:71px;top:99px;--s:.95">name</div>
<div class="t" style="left:134px;top:99px;--s:.95">type</div>
<div class="t" style="left:27px;top:118px;--s:.95">11</div>
<div class="a" style="left:59px;top:118px;width:52px;height:16px;overflow:hidden"><div class="t" style="left:2px;top:0;--s:.95">Ethna</div></div>
<div class="t" style="left:114px;top:118px;--s:.95">1</div>
<div class="t" style="left:27px;top:136px;--s:.95">12</div>
<div class="a" style="left:59px;top:136px;width:52px;height:16px;overflow:hidden"><div class="t" style="left:2px;top:0;--s:.95">BEAR.Sunday</div></div>
<div class="t" style="left:114px;top:136px;--s:.95">1</div>
<div class="t" style="left:27px;top:154px;--s:.95">13</div>
<div class="a" style="left:59px;top:154px;width:52px;height:16px;overflow:hidden"><div class="t" style="left:2px;top:0;--s:.95">Kohana</div></div>
<div class="t" style="left:114px;top:154px;--s:.95">1</div>
<div class="t" style="left:27px;top:172px;--s:.95">14</div>
<div class="a" style="left:59px;top:172px;width:52px;height:16px;overflow:hidden"><div class="t" style="left:2px;top:0;--s:.95">Ice Framework</div></div>
<div class="t" style="left:114px;top:172px;--s:.95">1</div>
<div class="t" style="left:27px;top:190px;--s:.95">15</div>
<div class="a" style="left:59px;top:190px;width:52px;height:16px;overflow:hidden"><div class="t" style="left:2px;top:0;--s:.95">AngularJS</div></div>
<div class="t" style="left:114px;top:190px;--s:.95">2</div>
<div class="t" style="left:27px;top:208px;--s:.95">16</div>
<div class="a" style="left:59px;top:208px;width:52px;height:16px;overflow:hidden"><div class="t" style="left:2px;top:0;--s:.95">Backbone.js</div></div>
<div class="t" style="left:114px;top:208px;--s:.95">2</div>
<div class="t" style="left:27px;top:226px;--s:.95">17</div>
<div class="a" style="left:59px;top:226px;width:52px;height:16px;overflow:hidden"><div class="t" style="left:2px;top:0;--s:.95">Ember.js</div></div>
<div class="t" style="left:114px;top:226px;--s:.95">2</div>
<div class="t" style="left:27px;top:244px;--s:.95">18</div>
<div class="a" style="left:59px;top:244px;width:52px;height:16px;overflow:hidden"><div class="t" style="left:2px;top:0;--s:.95">Vue.js</div></div>
<div class="t" style="left:114px;top:244px;--s:.95">2</div>
<div class="t" style="left:27px;top:262px;--s:.95">19</div>
<div class="a" style="left:59px;top:262px;width:52px;height:16px;overflow:hidden"><div class="t" style="left:2px;top:0;--s:.95">Knockout.js</div></div>
<div class="t" style="left:114px;top:262px;--s:.95">2</div>
<div class="t" style="left:27px;top:280px;--s:.95">20</div>
<div class="a" style="left:59px;top:280px;width:52px;height:16px;overflow:hidden"><div class="t" style="left:2px;top:0;--s:.95">React</div></div>
<div class="t" style="left:114px;top:280px;--s:.95">2</div>
<div class="t" style="left:27px;top:298px;--s:.95">21</div>
<div class="a" style="left:59px;top:298px;width:52px;height:16px;overflow:hidden"><div class="t" style="left:2px;top:0;--s:.95">Riot.js</div></div>
<div class="t" style="left:114px;top:298px;--s:.95">2</div>
<div class="t" style="left:27px;top:316px;--s:.95">22</div>
<div class="a" style="left:59px;top:316px;width:52px;height:16px;overflow:hidden"><div class="t" style="left:2px;top:0;--s:.95">Aurelia.js</div></div>
<div class="t" style="left:114px;top:316px;--s:.95">2</div>
<div class="t" style="left:27px;top:334px;--s:.95">23</div>
<div class="a" style="left:59px;top:334px;width:52px;height:16px;overflow:hidden"><div class="t" style="left:2px;top:0;--s:.95">Bottle</div></div>
<div class="t" style="left:114px;top:334px;--s:.95">3</div>
<div class="t" style="left:27px;top:352px;--s:.95">24</div>
<div class="a" style="left:59px;top:352px;width:52px;height:16px;overflow:hidden"><div class="t" style="left:2px;top:0;--s:.95">Django</div></div>
<div class="t" style="left:114px;top:352px;--s:.95">3</div>
<div class="t" style="left:27px;top:370px;--s:.95">25</div>
<div class="a" style="left:59px;top:370px;width:52px;height:16px;overflow:hidden"><div class="t" style="left:2px;top:0;--s:.95">Flask</div></div>
<div class="t" style="left:114px;top:370px;--s:.95">3</div>
<div class="t" style="left:27px;top:388px;--s:.95">26</div>
<div class="a" style="left:59px;top:388px;width:52px;height:16px;overflow:hidden"><div class="t" style="left:2px;top:0;--s:.95">Pyramid</div></div>
<div class="t" style="left:114px;top:388px;--s:.95">3</div>
<div class="t" style="left:27px;top:406px;--s:.95">27</div>
<div class="a" style="left:59px;top:406px;width:52px;height:16px;overflow:hidden"><div class="t" style="left:2px;top:0;--s:.95">Plone</div></div>
<div class="t" style="left:114px;top:406px;--s:.95">3</div>
<div class="t" style="left:27px;top:424px;--s:.95">28</div>
<div class="a" style="left:59px;top:424px;width:52px;height:16px;overflow:hidden"><div class="t" style="left:2px;top:0;--s:.95">Tornado</div></div>
<div class="t" style="left:114px;top:424px;--s:.95">3</div>
<div class="t" style="left:27px;top:442px;--s:.95">29</div>
<div class="a" style="left:59px;top:442px;width:52px;height:16px;overflow:hidden"><div class="t" style="left:2px;top:0;--s:.95">CherryPY</div></div>
<div class="t" style="left:114px;top:442px;--s:.95">3</div>
<div class="t" style="left:27px;top:460px;--s:.95">30</div>
<div class="a" style="left:59px;top:460px;width:52px;height:16px;overflow:hidden"><div class="t" style="left:2px;top:0;--s:.95">pandas</div></div>
<div class="t" style="left:114px;top:460px;--s:.95">3</div>
<div class="t" style="left:27px;top:478px;--s:.95">31</div>
<div class="a" style="left:59px;top:478px;width:52px;height:16px;overflow:hidden"><div class="t" style="left:2px;top:0;--s:.95">zzz</div></div>
<div class="t" style="left:114px;top:478px;--s:.95">4</div>
<div class="a" style="left:25px;top:496px;width:33px;height:16px;overflow:hidden"><div class="t" style="left:2px;top:0;--s:.8">&lt;オートフィールド&gt;</div></div>
<svg style="left:8px;top:499px" width="10" height="10"><path d="M5 0v10M0 5h10" stroke="#777" stroke-width="1"/></svg>
<div class="a" style="left:516px;top:116px;width:17px;height:412px;background:#f0f0f0"></div>
<div class="a" style="left:516px;top:252px;width:15px;height:259px;background:#c8c8c8"></div>
<svg style="left:520px;top:122px" width="8" height="6"><path d="M.8 5L4 1.8 7.2 5" fill="none" stroke="#505050" stroke-width="2"/></svg>
<svg style="left:520px;top:517px" width="8" height="6"><path d="M.8 1L4 4.2 7.2 1" fill="none" stroke="#505050" stroke-width="2"/></svg>
<div class="a" style="left:0;top:528px;width:326px;height:1px;background:#000"></div>
<div class="t" style="left:2px;top:530px;--w:34">レコード</div>
<div class="a" style="left:38px;top:529px;width:1px;height:16px;background:#000"></div>
<div class="a" style="left:39px;top:529px;width:51px;height:16px;background:#fff"></div>
<div class="a" style="left:39px;top:532px;width:2px;height:10px;background:#000"></div>
<div class="a" style="left:90px;top:529px;width:1px;height:16px;background:#000"></div>
<div class="t" style="left:94px;top:530px;--w:38">候補 31</div>
<div class="a" style="left:241px;top:530px;width:15px;height:16px;background:#c8c8c8;border:1px solid #d8d8d8"></div>
<div class="a" style="left:258px;top:530px;width:15px;height:16px;background:#c8c8c8;border:1px solid #d8d8d8"></div>
<div class="a" style="left:275px;top:530px;width:15px;height:16px;background:#e0e0e0;border:1px solid #d8d8d8"></div>
<div class="a" style="left:292px;top:530px;width:15px;height:16px;background:#e0e0e0;border:1px solid #d8d8d8"></div>
<div class="a" style="left:309px;top:530px;width:15px;height:16px;background:#e0e0e0;border:1px solid #d8d8d8"></div>
<svg style="left:244px;top:533px" width="9" height="10"><path d="M1.5 1v8" stroke="#9a9a9a" stroke-width="2"/><path d="M8 1v8L3.5 5z" fill="#9a9a9a"/></svg>
<svg style="left:262px;top:533px" width="9" height="10"><path d="M6.5 .8v8.4L1.8 5z" fill="#9a9a9a"/><path d="M7.5 1v8" stroke="#ddd" stroke-width="1"/></svg>
<svg style="left:279px;top:532px" width="9" height="11"><path d="M1.5 1v9l6-4.5z" fill="#000"/></svg>
<svg style="left:295px;top:532px" width="9" height="11"><path d="M1 1v9l5.5-4.5z" fill="#000"/><path d="M7 1v9" stroke="#000" stroke-width="2"/></svg>
<svg style="left:312px;top:532px" width="11" height="11"><path d="M5.5 .5v10M.5 5.5h10" stroke="#888" stroke-width="1.2"/></svg>
</div>
<script>
document.querySelectorAll('.t').forEach(function(e){
  if(/[\u3040-\u30ff\u4e00-\u9fff]/.test(e.textContent) && !e.style.webkitTextStroke) e.style.webkitTextStroke='.2px currentColor';
  var cs=getComputedStyle(e);
  var sc=parseFloat(cs.getPropertyValue('--s'));
  if(sc){e.style.transform='scaleX('+sc+')';return;}
  var w=parseFloat(cs.getPropertyValue('--w'));
  if(!w) return;
  var n=e.getBoundingClientRect().width;
  if(n>0) e.style.transform='scaleX('+(w/n)+')';
});
</script>
</body></html>
